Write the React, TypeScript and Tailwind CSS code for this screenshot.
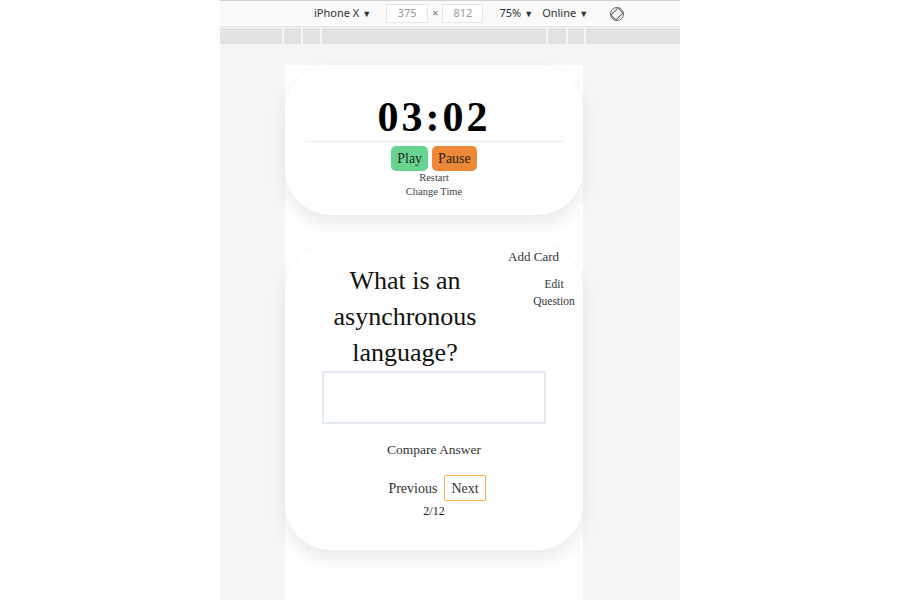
import React from 'react';

const serif = { fontFamily: '"Liberation Serif", "DejaVu Serif", serif' };

const RotateIcon: React.FC = () => (
  <svg width="16" height="16" viewBox="0 0 16 16" fill="none" stroke="#666" strokeWidth="1">
    <circle cx="8" cy="8" r="6.5" />
    <rect x="4.5" y="3" width="7" height="10" rx="1.2" transform="rotate(45 8 8)" />
  </svg>
);

const Caret: React.FC = () => <span className="ml-[3px] text-[9px]">▼</span>;

const Toolbar: React.FC = () => (
  <div className="h-[27px] border-t border-[#d4d4d4] border-b border-b-[#e2e2e2] bg-[#fafafa] flex items-center text-[11px] text-[#333]" style={{ fontFamily: '"Noto Sans", "Open Sans", sans-serif' }}>
    <span className="ml-[94px] flex items-center">iPhone X<Caret /></span>
    <span className="ml-[15px] w-[42px] h-[19px] border border-[#e6e6e6] bg-white text-[#999] flex items-center justify-center">375</span>
    <span className="mx-[4px] text-[#777]">×</span>
    <span className="w-[41px] h-[19px] border border-[#e6e6e6] bg-white text-[#999] flex items-center justify-center">812</span>
    <span className="ml-[16px] flex items-center">75%<Caret /></span>
    <span className="ml-[9px] flex items-center">Online<Caret /></span>
    <span className="ml-[21px] flex items-center"><RotateIcon /></span>
  </div>
);

const Ruler: React.FC = () => (
  <div className="h-[16px] mt-[1px] flex gap-[2px] bg-[#f6f6f6]">
    <div className="w-[62px] bg-[#e3e3e3]" />
    <div className="w-[17px] bg-[#e3e3e3]" />
    <div className="w-[17px] bg-[#e3e3e3]" />
    <div className="w-[224px] bg-[#e3e3e3]" />
    <div className="w-[18px] bg-[#e3e3e3]" />
    <div className="w-[16px] bg-[#e3e3e3]" />
    <div className="flex-1 bg-[#e3e3e3]" />
  </div>
);

const TimerCard: React.FC = () => (
  <div className="h-[150px] rounded-[46px] bg-white shadow-[0_8px_18px_rgba(0,0,0,0.09)] pt-[24px] flex flex-col items-center">
    <div className="h-[52px] leading-[56px] text-[42px] font-bold text-black tracking-[3px]">03:02</div>
    <div className="self-stretch mx-5 h-[1px] bg-[#e8edf2]" />
    <div className="mt-[4px] flex gap-[4px]">
      <button className="h-[25px] px-[6px] rounded-[5px] bg-[#68d391] text-[14px] text-[#1f2a22]">Play</button>
      <button className="h-[25px] px-[6px] rounded-[5px] bg-[#ed8936] text-[14px] text-[#2a1d12]">Pause</button>
    </div>
    <div className="text-[10.5px] leading-[14px] text-[#444]">Restart</div>
    <div className="text-[10.5px] leading-[14px] text-[#444]">Change Time</div>
  </div>
);

const QuestionCard: React.FC = () => (
  <div className="mt-[30px] h-[305px] rounded-[46px] bg-white shadow-[0_8px_18px_rgba(0,0,0,0.09)] pt-[4px] flex flex-col">
    <div className="flex pl-[45px]">
      <div className="w-[150px] pt-[14px] text-center text-[26px] leading-[36px] text-[#111]">
        What is an asynchronous language?
      </div>
      <div className="flex-1 flex flex-col items-end">
        <div className="mr-[24px] text-[13px] leading-[16px] text-[#333]">Add Card</div>
        <div className="mt-[11px] mr-[5px] w-[48px] text-center text-[11.5px] leading-[17px] text-[#333]">Edit Question</div>
      </div>
    </div>
    <div className="mx-auto w-[224px] h-[53px] border-2 border-[#e2e8f0] bg-white" />
    <div className="mt-[18px] text-center text-[13.5px] leading-[16px] text-[#333]">Compare Answer</div>
    <div className="mt-[17px] pl-[6px] flex justify-center items-center gap-[7px] text-[14px] text-[#333]">
      <span>Previous</span>
      <span className="h-[26px] px-[6px] flex items-center border border-[#f6ad55] rounded-[2px]">Next</span>
    </div>
    <div className="mt-[3px] text-center text-[12px] leading-[14px] text-[#222]">2/12</div>
  </div>
);

const App: React.FC = () => {
  return (
    <div className="w-[900px] h-[600px] bg-white overflow-hidden">
      <div className="ml-[220px] w-[460px] h-[600px] bg-[#f6f6f6] flex flex-col">
        <Toolbar />
        <Ruler />
        <div className="ml-[65px] mt-[21px] w-[298px] flex-1 bg-white" style={serif}>
          <TimerCard />
          <QuestionCard />
        </div>
      </div>
    </div>
  );
};

export default App;
